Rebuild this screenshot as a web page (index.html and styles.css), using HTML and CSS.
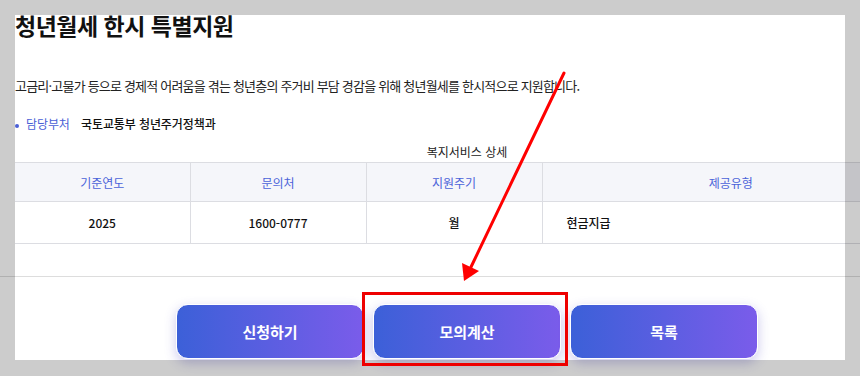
FILE: index.html
```html
<!DOCTYPE html>
<html lang="ko">
<head>
    <meta charset="UTF-8">
    <meta name="viewport" content="width=device-width, initial-scale=1.0">
    <title>청년월세 한시 특별지원</title>
    <link rel="stylesheet" href="styles.css">
</head>
<body>
    <div class="detail">
        <h2 class="title">청년월세 한시 특별지원</h2>
        <p class="desc">고금리·고물가 등으로 경제적 어려움을 겪는 청년층의 주거비 부담 경감을 위해 청년월세를 한시적으로 지원합니다.</p>
        <div class="dept">
            <span class="dept-label">담당부처</span>
            <span class="dept-name">국토교통부 청년주거정책과</span>
        </div>
        <table class="service">
            <caption>복지서비스 상세</caption>
            <colgroup>
                <col class="c1"><col class="c2"><col class="c3"><col>
            </colgroup>
            <thead>
                <tr><th>기준연도</th><th>문의처</th><th>지원주기</th><th>제공유형</th></tr>
            </thead>
            <tbody>
                <tr><td>2025</td><td>1600-0777</td><td>월</td><td class="left">현금지급</td></tr>
            </tbody>
        </table>
    </div>
    <div class="actions">
        <button class="btn">신청하기</button>
        <button class="btn">모의계산</button>
        <button class="btn">목록</button>
    </div>

    <!-- dimmed frame + annotation -->
    <div class="spot"></div>
    <svg class="marks" width="860" height="376" viewBox="0 0 860 376">
        <line x1="564" y1="73" x2="471" y2="267" stroke="#f00" stroke-width="3" stroke-linecap="round"/>
        <polygon points="464,281 462,263 479,271" fill="#f00"/>
        <rect x="363.5" y="293.5" width="203" height="71" fill="none" stroke="#e00" stroke-width="3"/>
    </svg>
</body>
</html>
```

FILE: styles.css
```css
html, body {
    margin: 0;
    padding: 0;
}
body {
    font-family: "Noto Sans CJK KR", "Noto Sans", sans-serif;
    background: #fff;
    color: #111;
    width: 860px;
    height: 376px;
    overflow: hidden;
    position: relative;
}
.detail {
    padding: 10px 0 32px 15px;
    border-bottom: 1px solid #ddd;
    width: 1000px;
}
.title {
    margin: 0;
    font-size: 23px;
    line-height: 30px;
    font-weight: 700;
    letter-spacing: -0.5px;
}
.desc {
    margin: 36px 0 0;
    font-size: 13px;
    line-height: 20px;
    letter-spacing: -0.8px;
    color: #222;
}
.dept {
    margin-top: 18px;
    font-size: 12px;
    line-height: 20px;
    letter-spacing: -0.1px;
}
.dept-label {
    color: #4a5fd6;
    padding-left: 11px;
    position: relative;
    margin-right: 8px;
}
.dept-label::before {
    content: "";
    position: absolute;
    left: 0;
    top: 9px;
    width: 4px;
    height: 4px;
    border-radius: 50%;
    background: #4a5fd6;
}
.dept-name {
    font-weight: 500;
}
.service {
    width: 904px;
    border-collapse: collapse;
    table-layout: fixed;
    font-size: 12px;
    margin-top: 0;
}
.service caption {
    line-height: 16px;
    padding: 10px 0 2px;
    font-size: 12px;
    color: #222;
}
.c1 { width: 175px; }
.c2 { width: 176px; }
.c3 { width: 176px; }
.service th {
    height: 38px;
    background: #f5f6fa;
    color: #4b63d9;
    font-weight: 400;
    border-top: 1px solid #dcdde2;
    border-bottom: 1px solid #dcdde2;
    padding: 0;
}
.service td {
    height: 41px;
    text-align: center;
    font-weight: 500;
    border-bottom: 1px solid #dcdde2;
    padding: 0;
}
.service th + th,
.service td + td {
    border-left: 1px solid #dcdde2;
}
.service td.left {
    text-align: left;
    padding-left: 24px;
}
.actions {
    width: 904px;
    padding: 27px 0 0 15px;
    display: flex;
    justify-content: center;
    gap: 9px;
}
.btn {
    width: 188px;
    height: 55px;
    border: 1px solid #fff;
    border-radius: 12px;
    background: linear-gradient(90deg, #3c60d8, #7a5cea);
    color: #fff;
    font-family: inherit;
    font-size: 15px;
    font-weight: 700;
    box-shadow: 0 4px 12px rgba(70, 60, 190, 0.28);
    cursor: pointer;
}
.spot {
    position: absolute;
    left: 15px;
    top: 15px;
    width: 830px;
    height: 345px;
    box-shadow: 0 0 0 2000px rgba(0, 0, 0, 0.2);
    pointer-events: none;
}
.marks {
    position: absolute;
    left: 0;
    top: 0;
    pointer-events: none;
}
```
